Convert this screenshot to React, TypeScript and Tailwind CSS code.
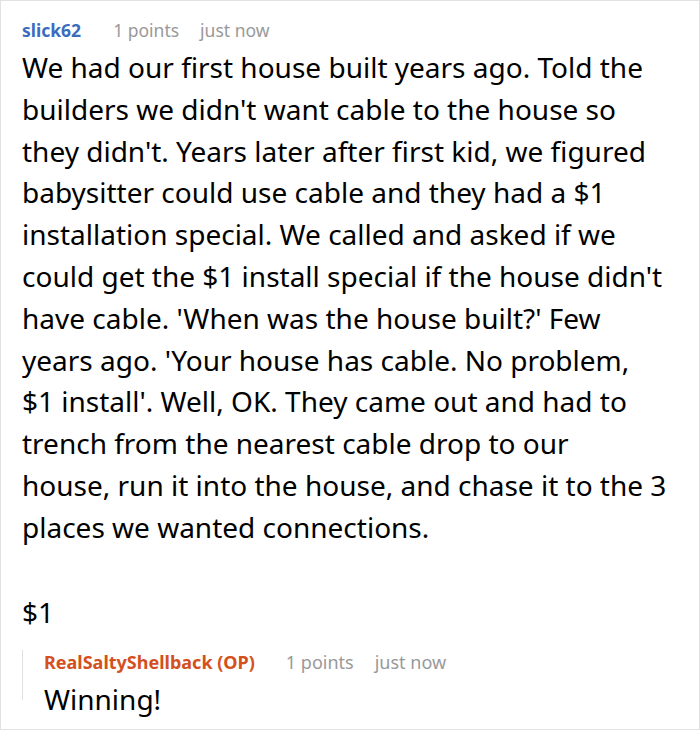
const lines = [
  'We had our first house built years ago. Told the',
  "builders we didn't want cable to the house so",
  "they didn't. Years later after first kid, we figured",
  'babysitter could use cable and they had a $1',
  'installation special. We called and asked if we',
  "could get the $1 install special if the house didn't",
  "have cable. 'When was the house built?' Few",
  "years ago. 'Your house has cable. No problem,",
  "$1 install'. Well, OK. They came out and had to",
  'trench from the nearest cable drop to our',
  'house, run it into the house, and chase it to the 3',
  'places we wanted connections.',
];

export default function App() {
  return (
    <div className="w-[700px] h-[730px] bg-white border border-[#e2e2e2] pl-[21px] pr-[10px] pt-[16px] font-['Noto_Sans',sans-serif] text-black">
      <div className="flex items-baseline text-[17.5px] leading-[26px]">
        <span className="font-bold text-[#3b6cbf]">slick62</span>
        <span className="ml-[32px] text-[#999999]">1 points</span>
        <span className="ml-[21px] text-[#999999]">just now</span>
      </div>
      <div className="mt-[4px] text-[28px] leading-[41.8px]">
        <p className="whitespace-nowrap">
          {lines.map((line, i) => (
            <span key={i} className="block">
              {line}
            </span>
          ))}
        </p>
        <p className="mt-[43px]">$1</p>
      </div>
      <div className="mt-[28px] border-l border-[#e0e0e0] pl-[21px] h-[50px]">
        <div className="-mt-[11px] flex items-baseline text-[18px] leading-[24px]">
          <span className="font-bold text-[#d4501d]">RealSaltyShellback (OP)</span>
          <span className="ml-[31px] text-[#999999]">1 points</span>
          <span className="ml-[21px] text-[#999999]">just now</span>
        </div>
        <p className="mt-[5px] text-[28px] leading-[40px]">Winning!</p>
      </div>
    </div>
  );
}
